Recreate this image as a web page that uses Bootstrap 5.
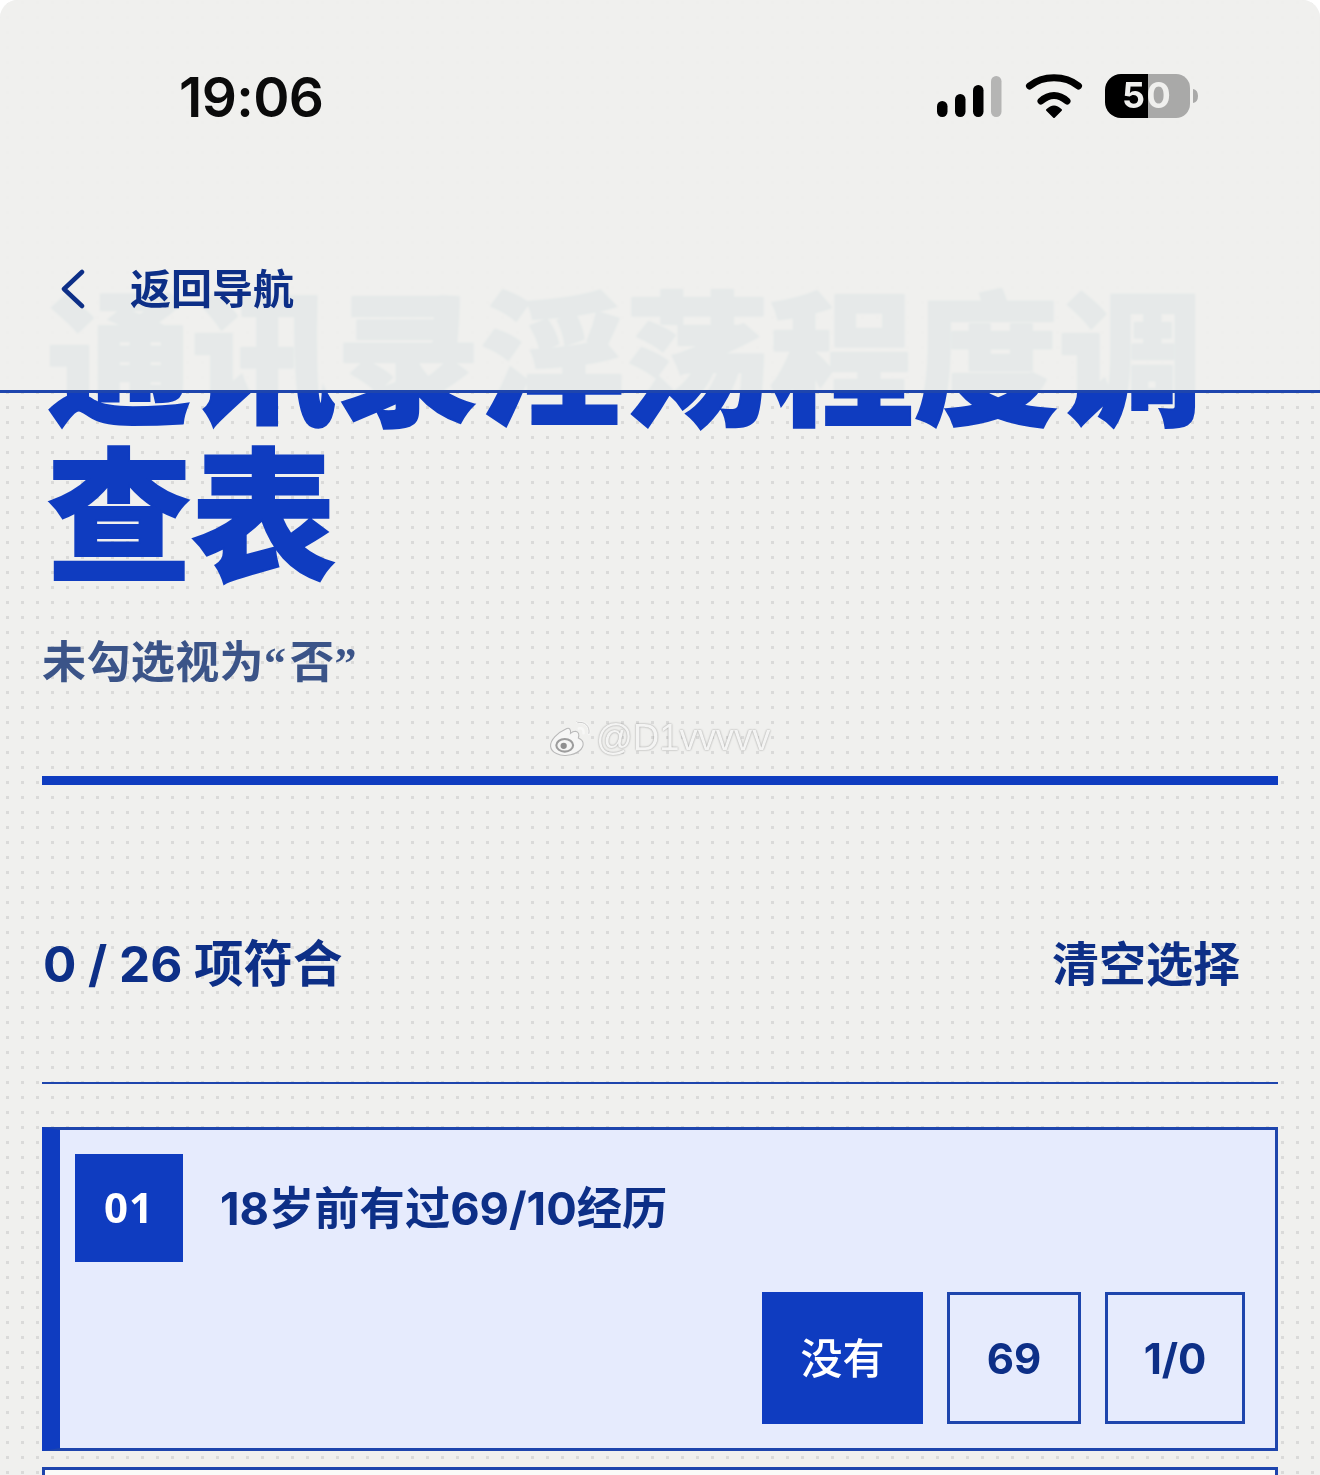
<!DOCTYPE html>
<html lang="zh-CN"><head><meta charset="utf-8"><title>通讯录淫荡程度调查表</title>
<link href="https://cdn.jsdelivr.net/npm/bootstrap@5.3.0/dist/css/bootstrap.min.css" rel="stylesheet">
<style>
html,body{margin:0;height:1475px;overflow:hidden;background:#fff}
body{font-family:Inter,"Noto Sans CJK SC",sans-serif;color:#0d2f87}
.screen{height:1475px;overflow:hidden;position:relative;background-color:#f0f0ee;background-image:radial-gradient(circle,#dadad9 1.5px,transparent 1.8px);background-size:15px 15px;background-position:0 -5px;border-radius:18px 18px 0 0}
.topbar{position:absolute;top:0;left:0;right:0;height:393px;background:rgba(239,239,237,.96);backdrop-filter:blur(1px) hue-rotate(-35deg) saturate(.75);border-bottom:3px solid #1e45ad;z-index:2}
.clock{font-family:Inter,sans-serif;font-size:55px;font-weight:600;color:#0b0b0b;line-height:1;left:179px;top:70px;position:absolute;letter-spacing:-.6px}
.status{position:absolute;left:936px;top:72px;width:264px;height:48px}
.backlink{position:absolute;left:60px;top:264px;height:50px;gap:43px;font-size:41px;font-weight:700;color:#0d2f87;line-height:50px}
.sheet{padding:273px 42px 0}
.headline{font-family:"Noto Sans CJK SC",sans-serif;font-weight:900;font-size:144.500px;line-height:156px;color:#0f3cc0;margin:0 0 0 5px;-webkit-text-stroke:2px #0f3cc0}
.subline{font-size:44px;font-weight:700;color:#3b5488;line-height:56px;margin:49px 0 0;letter-spacing:.4px}
.qmark{font-family:"Liberation Serif",serif;font-weight:700;letter-spacing:4px}
.heavyrule{height:9px;background:#0f3cc0;margin-top:84px}
.tally{height:299px;border-bottom:2px solid #1e45ad;padding:88px 0 28px}
.tally-count{font-size:49.500px;font-weight:700;line-height:60px;margin-left:1px}
.tally-clear{font-size:47px;font-weight:700;line-height:60px;margin-right:38px}
.qcard{margin-top:43px;height:324px;background:#e6ebfd;border:3px solid #1e45ad;border-left:18px solid #0f3cc0;padding:24px 30px 25px 15px}
.qnum{width:108px;height:108px;background:#0f3cc0;color:#fff;font-family:"Noto Sans",sans-serif;font-size:42px;font-weight:700;letter-spacing:1px;padding-bottom:4px}
.qtext{font-size:45.300px;font-weight:700;margin-left:37px;margin-top:2px;line-height:56px}
.qopts{gap:24px;margin-top:30px}
.qbtn{height:132px;border:3px solid #1e45ad;background:transparent;color:#0d2f87;font-size:42px;font-weight:700;border-radius:0;padding:0}
.qbtn.on{background:#0f3cc0;border-color:#0f3cc0;color:#fff;font-weight:500}
.w1{width:161px}.w2{width:134px}.w3{width:140px}
.nextcard{margin-top:16px;height:40px;background:#fafbf8;border:3px solid #1e45ad}
.mark-w{position:absolute;left:549px;top:717px;z-index:3;gap:3px;font-family:"Liberation Sans",sans-serif;font-size:36.400px;line-height:42px;color:#f4f4f3;text-shadow:0 0 2px rgba(0,0,0,.4)}
</style></head><body>
<div class="screen">
 <header class="topbar">
  <div class="clock">19:06</div>
  <svg class="status" viewBox="0 0 264 48" aria-hidden="true">
   <rect x="1" y="29" width="10.500" height="16" rx="5.200" fill="#000"/>
   <rect x="19" y="22" width="10.500" height="23" rx="5.200" fill="#000"/>
   <rect x="37" y="13" width="10.500" height="32" rx="5.200" fill="#000"/>
   <rect x="55" y="4" width="10.500" height="41" rx="5.200" fill="#b5b5b4"/>
   <path d="M93.500 14C107 3 129 3 142.500 14" fill="none" stroke="#000" stroke-width="7" stroke-linecap="round"/>
   <path d="M105 29C113 21.500 123 21.500 131 29" fill="none" stroke="#000" stroke-width="7" stroke-linecap="round"/>
   <path d="M111 38Q118 31 125 38L118 45Z" fill="#000" stroke="#000" stroke-width="2" stroke-linejoin="round"/>
   <path d="M212 2H185A16 16 0 0 0 169 18V30A16 16 0 0 0 185 46H212Z" fill="#000"/>
   <path d="M212 2H240A14 14 0 0 1 254 16V32A14 14 0 0 1 240 46H212Z" fill="#a9a9a8"/>
   <path d="M257 17Q262 18 262 24Q262 30 257 31Z" fill="#a9a9a8"/>
   <text x="186" y="36" font-family="Inter,sans-serif" font-size="36" font-weight="700" letter-spacing="1.500" fill="#f0f0ee">50</text>
  </svg>
  <a class="backlink d-flex align-items-center text-decoration-none" href="#">
   <svg width="27" height="40" viewBox="0 0 27 40" aria-hidden="true"><path d="M22 3 4 20l18 17" fill="none" stroke="#0d2f87" stroke-width="4.500" stroke-linecap="round" stroke-linejoin="round"/></svg>
   <span>返回导航</span>
  </a>
 </header>
 <main class="sheet">
  <h1 class="headline">通讯录淫荡程度调查表</h1>
  <p class="subline">未勾选视为<span class="qmark">“</span>否<span class="qmark">”</span></p>
  <div class="heavyrule"></div>
  <div class="tally d-flex justify-content-between align-items-center">
   <div class="tally-count">0 / 26 项符合</div>
   <div class="tally-clear">清空选择</div>
  </div>
  <section class="qcard">
   <div class="d-flex align-items-center">
    <div class="qnum d-flex align-items-center justify-content-center">01</div>
    <div class="qtext">18岁前有过69/10经历</div>
   </div>
   <div class="qopts d-flex justify-content-end">
    <button class="btn qbtn on w1">没有</button>
    <button class="btn qbtn w2">69</button>
    <button class="btn qbtn w3">1/0</button>
   </div>
  </section>
  <div class="nextcard"></div>
 </main>
 <div class="mark-w d-flex align-items-center">
  <svg width="44" height="38" viewBox="0 0 42 36" aria-hidden="true"><path d="M17 9C8 13 1 20 1.500 26c.5 6 9 9.500 16 8.500 9-1 16-6 15-12-.5-3-3.500-4-4.500-4.500 1-3 .5-6-2.500-6.500-2 0-4 1-5 2 .5-3.500-1-5.500-3.500-4.500Z" fill="#f6f6f5" stroke="#b9b9b9" stroke-width="1"/><ellipse cx="15" cy="25" rx="8" ry="6" fill="none" stroke="#9d9d9d" stroke-width="2"/><circle cx="14" cy="25.500" r="3" fill="#8f8f8f"/><path d="M27 3.500c7-2 12.500 3.500 11 10.500M28.500 9c3-1 5 1 4.500 4.500" fill="none" stroke="#f7f7f6" stroke-width="2.500" stroke-linecap="round"/><path d="M27 3.500c7-2 12.500 3.500 11 10.500" fill="none" stroke="#bbb" stroke-width=".7"/></svg>
  <span>@D1vvvvv</span>
 </div>
</div>
</body></html>
